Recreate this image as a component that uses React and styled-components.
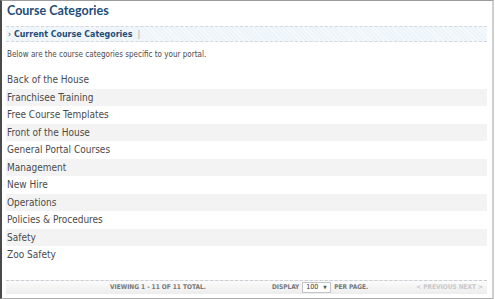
import styled, { createGlobalStyle } from "styled-components";

const GlobalStyle = createGlobalStyle`
  html, body {
    margin: 0;
    padding: 0;
    background: #fff;
  }
  body {
    font-family: "DejaVu Sans Condensed", "DejaVu Sans", sans-serif;
    color: #444;
  }
`;

const categories = [
  "Back of the House",
  "Franchisee Training",
  "Free Course Templates",
  "Front of the House",
  "General Portal Courses",
  "Management",
  "New Hire",
  "Operations",
  "Policies & Procedures",
  "Safety",
  "Zoo Safety",
];

const App = () => {
  return (
    <>
      <GlobalStyle />
      <Frame>
        <Title>Course Categories</Title>
        <SubHeader>
          <Arrow>›</Arrow>
          <SubTitle>Current Course Categories</SubTitle>
          <Pipe>|</Pipe>
        </SubHeader>
        <Intro>Below are the course categories specific to your portal.</Intro>
        <List>
          {categories.map((name, i) => (
            <Row key={name} $alt={i % 2 === 1}>{name}</Row>
          ))}
        </List>
        <Footer>
          <Viewing>Viewing 1 - 11 of 11 total.</Viewing>
          <Display>
            Display
            <Select>
              100
              <Caret>▼</Caret>
            </Select>
            per page.
          </Display>
          <Pager>&lt; Previous Next &gt;</Pager>
        </Footer>
      </Frame>
    </>
  );
};

export default App;

const Frame = styled.div`
  width: 494px;
  height: 299px;
  box-sizing: border-box;
  border-top: 1px solid #9c9c9c;
  border-left: 2px solid #4a4a4a;
  border-right: 2px solid #cfcfcf;
  border-bottom: 1px solid #adadad;
  padding: 0 5px 0 4px;
  display: flex;
  flex-direction: column;
`
const Title = styled.div`
  height: 25px;
  padding-left: 1px;
  font-family: Lato, "Liberation Sans", sans-serif;
  font-weight: 700;
  font-size: 12.5px;
  line-height: 20px;
  color: #1e4d78;
  box-sizing: border-box;
`
const SubHeader = styled.div`
  height: 16px;
  box-sizing: border-box;
  display: flex;
  align-items: center;
  padding-left: 2px;
  border-top: 1px dashed #d4d8dc;
  border-bottom: 1px dashed #d4d8dc;
  background-color: #eef5fa;
  background-image: repeating-linear-gradient(
    45deg,
    rgba(255, 255, 255, 0.5) 0px,
    rgba(255, 255, 255, 0.5) 1px,
    transparent 1px,
    transparent 3px
  );
`
const Arrow = styled.span`
  font-size: 8px;
  color: #1e4d78;
  margin-right: 3px;
`
const SubTitle = styled.span`
  font-weight: 700;
  font-size: 8.8px;
  color: #1e4d78;
`
const Pipe = styled.span`
  font-size: 9px;
  color: #9aa;
  margin-left: 5px;
`
const Intro = styled.div`
  height: 29px;
  padding: 8px 0 0 1px;
  box-sizing: border-box;
  font-size: 8px;
  color: #4a4a4a;
`
const List = styled.div`
  display: flex;
  flex-direction: column;
`
const Row = styled.div`
  height: 17.5px;
  line-height: 17.5px;
  padding-left: 1px;
  font-size: 10px;
  color: #4a4a4a;
  background: ${({ $alt }) => ($alt ? "#f3f3f3" : "#fff")};
`
const Footer = styled.div`
  margin-top: 16px;
  height: 14px;
  box-sizing: border-box;
  border-top: 1px dashed #c9ced4;
  background: linear-gradient(#fbfbfb, #ededed);
  display: flex;
  align-items: center;
  font-weight: 700;
  font-size: 6.5px;
  text-transform: uppercase;
  color: #777;
`
const Viewing = styled.div`
  margin-left: 104px;
`
const Display = styled.div`
  margin-left: 66px;
  display: flex;
  align-items: center;
  gap: 3px;
`
const Select = styled.div`
  width: 29px;
  height: 11px;
  box-sizing: border-box;
  border: 1px solid #c4c4c4;
  background: #fff;
  display: flex;
  align-items: center;
  padding-left: 3px;
  font-weight: 400;
  font-size: 7px;
  color: #333;
`
const Caret = styled.span`
  font-size: 5px;
  margin-left: 5px;
  color: #555;
`
const Pager = styled.div`
  margin-left: auto;
  margin-right: 4px;
  color: #c8c8c8;
`
